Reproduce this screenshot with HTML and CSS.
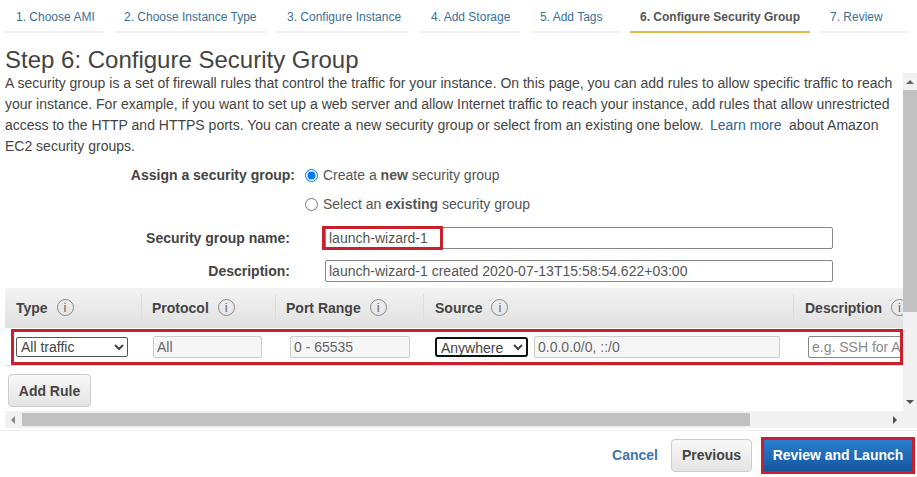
FILE: index.html
```html
<!DOCTYPE html>
<html lang="en">
<head>
  <meta charset="UTF-8" />
  <title>Step 6: Configure Security Group</title>
  <link rel="stylesheet" href="styles.css">
</head>
<body>

  <!-- Wizard tabs -->
  <div class="tabs">
    <a class="tab tab-1">1. Choose AMI</a>
    <a class="tab tab-2">2. Choose Instance Type</a>
    <a class="tab tab-3">3. Configure Instance</a>
    <a class="tab tab-4">4. Add Storage</a>
    <a class="tab tab-5">5. Add Tags</a>
    <a class="tab tab-6 active">6. Configure Security Group</a>
    <a class="tab tab-7">7. Review</a>
  </div>

  <h1>Step 6: Configure Security Group</h1>

  <div class="scroller">
    <div class="content">
      <p class="intro">A security group is a set of firewall rules that control the traffic for your instance. On this page, you can add rules to allow specific traffic to reach your instance. For example, if you want to set up a web server and allow Internet traffic to reach your instance, add rules that allow unrestricted access to the HTTP and HTTPS ports. You can create a new security group or select from an existing one below. <a class="learn">Learn more</a> about Amazon EC2 security groups.</p>

      <div class="assign">
        <div class="assign-label">Assign a security group:</div>
        <div class="assign-options">
          <label class="radio"><input type="radio" name="sg" checked> <span>Create a <b>new</b> security group</span></label>
          <label class="radio"><input type="radio" name="sg"> <span>Select an <b>existing</b> security group</span></label>
        </div>
      </div>

      <div class="field name-field">
        <label>Security group name:</label>
        <div class="field-input">
          <input type="text" value="launch-wizard-1">
          <div class="mark mark-name"></div>
        </div>
      </div>
      <div class="field desc-field">
        <label>Description:</label>
        <div class="field-input">
          <input type="text" value="launch-wizard-1 created 2020-07-13T15:58:54.622+03:00">
        </div>
      </div>

      <div class="rules">
        <div class="rules-head">
          <div class="th">Type <span class="info">i</span></div>
          <div class="th">Protocol <span class="info">i</span></div>
          <div class="th">Port Range <span class="info">i</span></div>
          <div class="th th-source">Source <span class="info">i</span></div>
          <div class="th th-desc">Description <span class="info">i</span></div>
        </div>
        <div class="rules-row">
          <div class="td"><select class="type-select"><option>All traffic</option></select></div>
          <div class="td"><input class="ro proto-input" type="text" value="All" readonly></div>
          <div class="td port-cell"><input class="ro port-input" type="text" value="0 - 65535" readonly></div>
          <div class="td source-cell">
            <select class="source-select"><option>Anywhere</option></select>
            <input class="ro cidr-input" type="text" value="0.0.0.0/0, ::/0" readonly>
          </div>
          <div class="td desc-cell"><input class="desc-input" type="text" placeholder="e.g. SSH for Admin Desktop"></div>
          <div class="mark mark-row"></div>
        </div>
      </div>

      <button class="btn add-rule">Add Rule</button>
    </div>

    <!-- Fake scrollbars -->
    <div class="vbar">
      <span class="arrow-up"></span>
      <div class="vthumb"></div>
      <span class="arrow-down"></span>
    </div>
    <div class="hbar">
      <span class="arrow-left"></span>
      <div class="hthumb"></div>
      <span class="arrow-right"></span>
    </div>
    <div class="corner"></div>
  </div>

  <div class="footer">
    <a class="cancel">Cancel</a>
    <button class="btn previous">Previous</button>
    <button class="btn launch">Review and Launch</button>
  </div>

</body>
</html>
```

FILE: styles.css
```css
body {
  font-family: "Liberation Sans", Arial, sans-serif;
  font-size: 14px;
  color: #444;
  background-color: #fff;
  margin: 0;
  padding: 0;
  height: 477px;
  overflow: hidden;
}
.tabs {
  display: flex;
  gap: 10px;
  padding-left: 4px;
  height: 33px;
}
.tab {
  box-sizing: border-box;
  height: 33px;
  padding: 10px 0 0 12px;
  font-size: 12px;
  color: #3b7097;
  border-bottom: 2px solid #f1f1f1;
}
.tab-1 { width: 100px; }
.tab-2 { width: 151px; padding-left: 9px; margin-left: 1px; }
.tab-3 { width: 132px; padding-left: 11px; }
.tab-4 { width: 100px; padding-left: 11px; margin-left: 2px; }
.tab-5 { width: 90px; padding-left: 10px; }
.tab-6 { width: 180px; padding-left: 10px; }
.tab-7 { width: 90px; padding-left: 10px; }
.tab.active {
  color: #555;
  font-weight: bold;
  border-bottom-color: #e5b84f;
}
h1 {
  margin: 0;
  padding: 13px 0 0 5px;
  height: 27px;
  font-size: 24px;
  line-height: 27px;
  font-weight: normal;
  color: #444;
}
.scroller {
  display: grid;
  grid-template-columns: 898px 14px;
  grid-template-rows: 338px 17px;
  margin-left: 5px;
}
.content {
  overflow: hidden;
}
.intro {
  margin: 0;
  line-height: 21px;
  width: 895px;
}
.learn {
  color: #2f6397;
  margin: 0 3.5px 0 2.5px;
}
.assign {
  display: flex;
  margin-top: 6px;
}
.assign-label {
  width: 290px;
  text-align: right;
  font-weight: bold;
  line-height: 22px;
  margin-top: 1px;
}
.assign-options {
  padding-left: 10px;
}
.radio {
  display: flex;
  align-items: center;
  height: 22px;
  margin-top: 1px;
  margin-bottom: 7px;
}
.radio input {
  margin: 0 5px 0 0;
  width: 13px;
  height: 13px;
}
.radio span {
  color: #555;
}
.field {
  display: flex;
  align-items: center;
}
.name-field {
  margin-top: 5px;
}
.desc-field {
  margin-top: 11px;
}
.field label {
  width: 285px;
  text-align: right;
  font-weight: bold;
}
.field-input {
  position: relative;
  margin-left: 35px;
}
.field-input input {
  box-sizing: border-box;
  width: 508px;
  height: 22px;
  padding: 0 3px;
  border: 1px solid #888;
  border-radius: 2px;
  font-family: inherit;
  font-size: 14px;
  color: #555;
}
.mark {
  position: absolute;
  box-sizing: border-box;
  border: 3px solid #c8202d;
  pointer-events: none;
}
.mark-name {
  left: -3px;
  top: -1px;
  width: 121px;
  height: 24px;
}
.rules {
  margin-top: 6px;
  width: 898px;
  overflow: hidden;
}
.rules-head,
.rules-row {
  display: grid;
  grid-template-columns: 136px 134px 148px 370px 200px;
}
.rules-head {
  height: 40px;
  background: linear-gradient(#f3f3f3, #e0e0e0);
  align-items: center;
}
.th {
  height: 28px;
  line-height: 28px;
  padding-left: 11px;
  font-weight: bold;
  font-size: 14px;
  border-right: 1px solid #ddd;
  margin-right: -1px;
  white-space: nowrap;
}
.th-source,
.th-desc {
  padding-left: 12px;
}
.info {
  display: inline-block;
  box-sizing: border-box;
  width: 17px;
  height: 17px;
  margin-left: 5px;
  border: 1px solid #888;
  border-radius: 50%;
  line-height: 15px;
  text-align: center;
  font-weight: normal;
  font-size: 13px;
  color: #666;
  vertical-align: 1px;
}
.rules-row {
  position: relative;
  height: 37px;
  border-bottom: 1px solid #ddd;
  align-items: center;
}
.mark-row {
  left: 6px;
  top: 1px;
  width: 892px;
  height: 36px;
}
.td {
  padding-left: 11px;
  display: flex;
  align-items: center;
  white-space: nowrap;
}
select {
  box-sizing: border-box;
  height: 20px;
  font-family: inherit;
  font-size: 14px;
  color: #444;
  background-color: #fff;
  border: 1px solid #555;
  border-radius: 2px;
}
.type-select {
  width: 112px;
}
.source-select {
  width: 93px;
  border: 2px solid #111;
  border-radius: 3px;
}
.ro,
.desc-input {
  box-sizing: border-box;
  height: 22px;
  padding: 0 3px;
  font-family: inherit;
  font-size: 14px;
  color: #666;
  background-color: #f6f6f6;
  border: 1px solid #ccc;
  border-radius: 2px;
}
.proto-input {
  width: 109px;
  margin-left: 1px;
}
.port-cell {
  padding-left: 15px;
}
.port-input {
  width: 120px;
}
.cidr-input {
  width: 246px;
  margin-left: 6px;
}
.source-cell {
  padding-left: 12px;
}
.desc-cell {
  padding-left: 15px;
}
.desc-input {
  width: 170px;
  background-color: #fff;
  border-color: #888;
}
.desc-input::placeholder {
  color: #8a8a8a;
}
.btn {
  font-family: inherit;
  font-weight: bold;
  font-size: 14px;
  color: #444;
  background: linear-gradient(#f8f8f8, #e4e4e4);
  border: 1px solid #ccc;
  border-radius: 4px;
  cursor: pointer;
}
.add-rule {
  display: block;
  width: 83px;
  height: 33px;
  margin: 8px 0 0 3px;
}
.vbar {
  position: relative;
  background-color: #f1f1f1;
}
.vthumb {
  position: absolute;
  left: 0;
  right: 0;
  top: 17px;
  height: 222px;
  background-color: #c1c1c1;
}
.arrow-up,
.arrow-down,
.arrow-left,
.arrow-right {
  position: absolute;
  width: 0;
  height: 0;
  border-style: solid;
  border-color: transparent;
}
.arrow-up {
  top: 7px;
  left: 3px;
  border-width: 0 4px 4px;
  border-bottom-color: #666;
}
.arrow-down {
  bottom: 7px;
  left: 3px;
  border-width: 4px 4px 0;
  border-top-color: #505050;
}
.hbar {
  position: relative;
  background-color: #f1f1f1;
}
.hthumb {
  position: absolute;
  left: 17px;
  top: 2px;
  width: 728px;
  height: 13px;
  background-color: #c1c1c1;
}
.arrow-left {
  left: 6px;
  top: 5px;
  border-width: 4px 4px 4px 0;
  border-right-color: #888;
}
.arrow-right {
  right: 6px;
  top: 5px;
  border-width: 4px 0 4px 4px;
  border-left-color: #505050;
}
.corner {
  background-color: #f1f1f1;
}
.footer {
  display: flex;
  align-items: center;
  justify-content: flex-end;
  height: 44px;
  margin-top: 2px;
  padding: 2px 5px 0 0;
  border-top: 1px solid #eee;
}
.cancel {
  font-weight: bold;
  color: #3f74b0;
  margin-right: 13px;
}
.previous {
  width: 81px;
  height: 33px;
}
.launch {
  position: relative;
  width: 148px;
  height: 31px;
  margin-left: 12px;
  color: #fff;
  background: linear-gradient(#2a7fd0, #15569f);
  border: none;
  border-radius: 0;
  outline: 3px solid #c8202d;
}
```
